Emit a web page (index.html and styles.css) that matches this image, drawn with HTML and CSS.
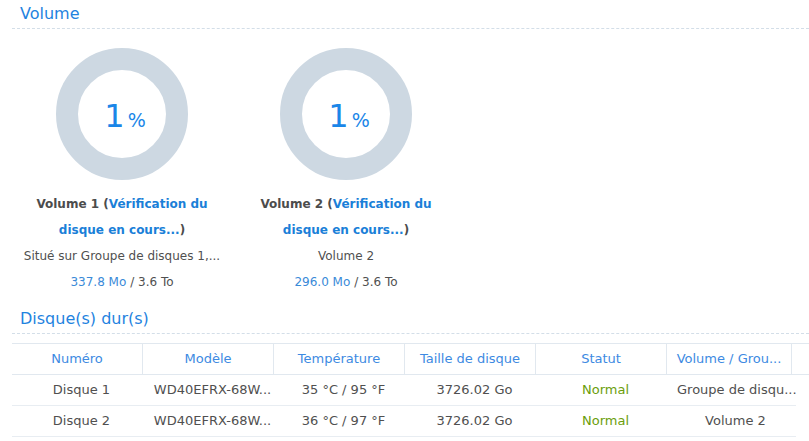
FILE: index.html
```html
<!DOCTYPE html>
<html lang="fr">
<head>
  <meta charset="UTF-8" />
  <title>Stockage</title>
  <link rel="stylesheet" href="styles.css">
</head>
<body>

  <div class="section-title">Volume</div>

  <div class="volumes">
    <div class="volume">
      <div class="donut">
        <span class="pct">1</span><span class="pct-sign">%</span>
      </div>
      <div class="vol-name">Volume 1 (<span class="state">Vérification du disque en cours...</span>)</div>
      <div class="vol-line">Situé sur Groupe de disques 1,...</div>
      <div class="vol-line"><span class="used">337.8 Mo</span> / 3.6 To</div>
    </div>

    <div class="volume">
      <div class="donut">
        <span class="pct">1</span><span class="pct-sign">%</span>
      </div>
      <div class="vol-name">Volume 2 (<span class="state">Vérification du disque en cours...</span>)</div>
      <div class="vol-line">Volume 2</div>
      <div class="vol-line"><span class="used">296.0 Mo</span> / 3.6 To</div>
    </div>
  </div>

  <div class="section-title">Disque(s) dur(s)</div>

  <div class="disks">
    <div class="disk-head">
      <div>Numéro</div>
      <div>Modèle</div>
      <div>Température</div>
      <div>Taille de disque</div>
      <div>Statut</div>
      <div>Volume / Grou...</div>
      <div class="filler"></div>
    </div>
    <div class="disk-row">
      <div>Disque 1</div>
      <div>WD40EFRX-68W...</div>
      <div>35 °C / 95 °F</div>
      <div>3726.02 Go</div>
      <div class="ok">Normal</div>
      <div>Groupe de disqu...</div>
    </div>
    <div class="disk-row">
      <div>Disque 2</div>
      <div>WD40EFRX-68W...</div>
      <div>36 °C / 97 °F</div>
      <div>3726.02 Go</div>
      <div class="ok">Normal</div>
      <div>Volume 2</div>
    </div>
  </div>

</body>
</html>
```

FILE: styles.css
```css
body {
  margin: 0;
  padding: 0 0 0 12px;
  font-family: "DejaVu Sans", Verdana, sans-serif;
  color: #505050;
  background: #fff;
  overflow: hidden;
}

.section-title {
  height: 28px;
  line-height: 28px;
  padding-left: 8px;
  font-size: 16px;
  color: #1f83e0;
  border-bottom: 1px dashed #d3dee8;
}

.volumes {
  display: flex;
  margin-left: -2px;
  padding-top: 19px;
  height: 276px;
  box-sizing: border-box;
}

.volume {
  width: 224px;
  display: flex;
  flex-direction: column;
  align-items: center;
}

.donut {
  width: 132px;
  height: 132px;
  box-sizing: border-box;
  border: 22px solid #cdd8e2;
  border-radius: 50%;
  display: flex;
  justify-content: center;
  align-items: baseline;
  padding-top: 26px;
  padding-left: 6px;
  color: #1a86e8;
}

.pct {
  font-size: 32px;
  line-height: 40px;
}

.pct-sign {
  font-size: 19px;
  margin-left: 3px;
}

.vol-name {
  margin-top: 11px;
  width: 200px;
  text-align: center;
  font-size: 12px;
  font-weight: bold;
  line-height: 26px;
  color: #4c4c4c;
}

.state {
  color: #1a7fd8;
}

.vol-line {
  font-size: 12px;
  line-height: 26px;
  white-space: nowrap;
}

.used {
  color: #3a8ad8;
}

.disks {
  margin-top: 9px;
  font-size: 13px;
}

.disk-head {
  display: grid;
  grid-template-columns: repeat(5, 131px) 125px 1fr;
  height: 30px;
  border-top: 1px solid #e1e8ef;
  border-bottom: 1px solid #e1e8ef;
  color: #3d8ae2;
}

.disk-head div {
  line-height: 29px;
  text-align: center;
  border-right: 1px solid #e1e8ef;
  white-space: nowrap;
  overflow: hidden;
}

.disk-head .filler {
  border-right: none;
}

.disk-row {
  display: grid;
  grid-template-columns: repeat(5, 131px) 129px;
  width: 784px;
  height: 31px;
  box-sizing: border-box;
  border-bottom: 1px solid #e8edf2;
}

.disk-row div {
  line-height: 30px;
  text-align: center;
  padding: 0 2px 0 10px;
  white-space: nowrap;
  overflow: hidden;
}

.disk-row .ok {
  color: #6b9e0c;
}
```
